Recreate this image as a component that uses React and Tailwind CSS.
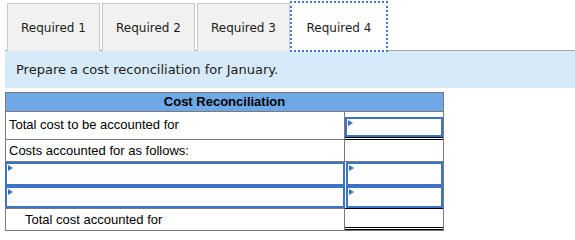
import React from "react";

const tabs = ["Required 1", "Required 2", "Required 3", "Required 4"];

// little blue arrow marking an answer cell
function Marker() {
  return (
    <span className="absolute left-[1px] top-[1px] h-0 w-0 border-y-[3px] border-l-[5px] border-y-transparent border-l-[#3a70c2]" />
  );
}

function AnswerBox({ className = "" }) {
  return (
    <div className={`relative border-2 border-[#3c73c4] bg-white ${className}`}>
      <Marker />
    </div>
  );
}

export default function App() {
  const active = 3;

  return (
    <div className="h-[240px] w-[575px] bg-white pt-[3px] text-[#1c1c1c]">
      {/* tab strip */}
      <div className="ml-[5px] flex h-[48px] gap-[2px] border-b border-[#a9a9a9] pl-[2px] font-['Verdana','DejaVu_Sans',sans-serif] text-[12px]">
        {tabs.map((label, i) =>
          i === active ? (
            <div
              key={label}
              className="-ml-[2px] -mt-[2px] -mb-[1px] flex h-[51px] w-[98px] items-center justify-center border-2 border-dotted border-[#3c78cc] bg-white pt-[3px]"
            >
              {label}
            </div>
          ) : (
            <div
              key={label}
              className="flex h-[48px] w-[93px] items-center justify-center border border-b-0 border-[#c8c8c8] bg-[#f1f1f1]"
            >
              {label}
            </div>
          )
        )}
      </div>

      <div className="ml-[5px] flex h-[37px] items-center bg-[#d7eaf9] pl-[11px] font-['Verdana','DejaVu_Sans',sans-serif] text-[13px]">
        Prepare a cost reconciliation for January.
      </div>

      {/* reconciliation table */}
      <div className="ml-[5px] mt-[4px] w-[439px] border border-[#7a7a7a] font-['Liberation_Sans',Arial,sans-serif] text-[13px] text-black">
        <div className="flex h-[19px] items-center justify-center border-b border-[#7a7a7a] bg-[#6fa8e7] font-bold">
          Cost Reconciliation
        </div>

        <div className="grid grid-cols-[339px_1fr]">
          {/* total cost to be accounted for */}
          <div className="flex h-[28px] items-end border-b border-r border-[#7a7a7a] pb-[5px] pl-[3px]">
            Total cost to be accounted for
          </div>
          <div className="flex h-[28px] flex-col justify-end border-b-[3px] border-double border-black pt-[5px]">
            <AnswerBox className="h-[20px]" />
          </div>

          <div className="flex h-[22px] items-center border-b border-r border-[#7a7a7a] pl-[3px]">
            Costs accounted for as follows:
          </div>
          <div className="h-[22px] border-b border-[#7a7a7a]" />

          {/* entry rows */}
          <AnswerBox className="-ml-[1px] h-[24px] w-[340px]" />
          <AnswerBox className="ml-[1px] h-[24px]" />
          <AnswerBox className="-ml-[1px] h-[22px] w-[340px]" />
          <AnswerBox className="ml-[1px] h-[22px]" />

          <div className="flex h-[22px] items-center border-r border-t border-[#7a7a7a] pl-[19px]">
            Total cost accounted for
          </div>
          <div className="h-[22px] border-b-[3px] border-t border-double border-black" />
        </div>
      </div>
    </div>
  );
}
